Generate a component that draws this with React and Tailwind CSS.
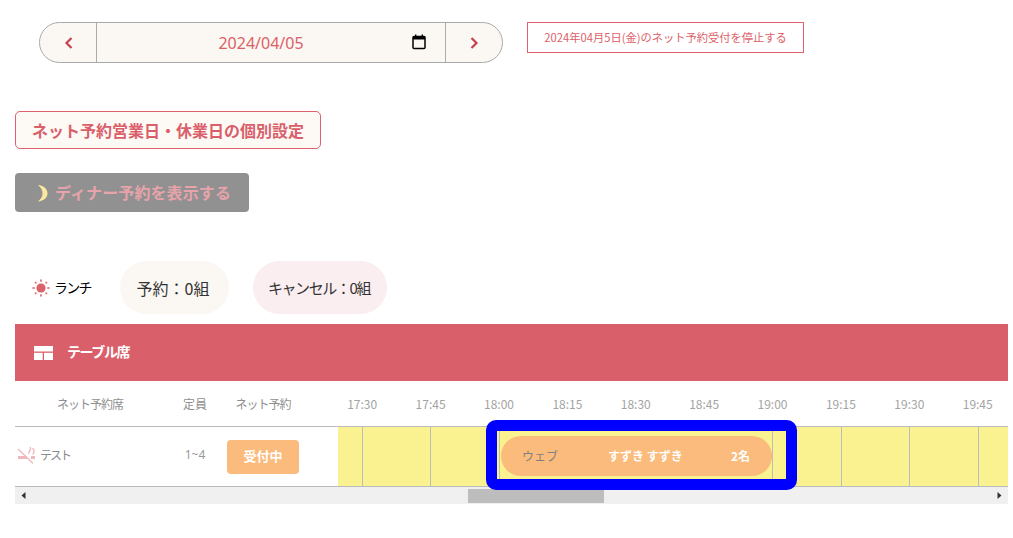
const font = { fontFamily: '"Noto Sans CJK JP", "Noto Sans", sans-serif' };

const times = ['17:30', '17:45', '18:00', '18:15', '18:30', '18:45', '19:00', '19:15', '19:30', '19:45'];
// 予約が入っている枠は罫線なし
const merged = ['18:15', '18:30', '18:45'];

function Chevron({ dir }) {
  return (
    <svg width="10" height="14" viewBox="0 0 10 14" fill="none" stroke="#c9404e" strokeWidth="2.2">
      <path d={dir === 'left' ? 'M7.5 2 L2.5 7 L7.5 12' : 'M2.5 2 L7.5 7 L2.5 12'} />
    </svg>
  );
}

function CalendarIcon() {
  return (
    <svg width="14" height="16" viewBox="0 0 14 16" className="block">
      <path d="M3 0.5h1.4v2H3zM9.6 0.5H11v2H9.6z" fill="#000" />
      <rect x="1" y="2.5" width="12" height="12" rx="1" fill="none" stroke="#000" strokeWidth="1.5" />
      <rect x="1" y="2.5" width="12" height="3" fill="#000" />
    </svg>
  );
}

function SunIcon() {
  return (
    <svg width="18" height="18" viewBox="0 0 18 18" fill="#dd6069">
      <circle cx="9" cy="9" r="4.6" />
      <rect x="8.2" y="0.5" width="1.6" height="2.2" />
      <rect x="8.2" y="15.3" width="1.6" height="2.2" />
      <rect x="0.5" y="8.2" width="2.2" height="1.6" />
      <rect x="15.3" y="8.2" width="2.2" height="1.6" />
      <rect x="2.8" y="2.8" width="1.7" height="1.7" />
      <rect x="13.5" y="2.8" width="1.7" height="1.7" />
      <rect x="2.8" y="13.5" width="1.7" height="1.7" />
      <rect x="13.5" y="13.5" width="1.7" height="1.7" />
    </svg>
  );
}

function TableIcon() {
  return (
    <svg width="19" height="14" viewBox="0 0 19 14" fill="#fff" className="mt-[3px]">
      <rect x="0" y="0" width="19" height="5.5" />
      <rect x="0" y="6.8" width="8.7" height="7.2" />
      <rect x="10" y="6.8" width="9" height="7.2" />
    </svg>
  );
}

function MoonIcon() {
  return (
    <svg width="11" height="18" viewBox="0 0 11 18" fill="#fbe8a0" className="mt-[3px]">
      <path d="M1 1 C7 1.500 10.500 5 10.500 9.500 C10.500 13.500 7 17 1 17.500 C4 15 5.500 12.500 5.500 9.500 C5.500 6 4 3.500 1 1 Z" />
    </svg>
  );
}

function NoSmokingIcon() {
  return (
    <svg width="19" height="18" viewBox="0 0 19 18" fill="none" stroke="#f0b8bd">
      <path d="M1 3 L16 17.500" strokeWidth="1.300" />
      <path d="M1 11.500 H10" strokeWidth="3" />
      <path d="M14 11.500 H18" strokeWidth="3" />
      <path d="M12 8 C10 5 15.500 4.500 13 1 M15.500 8.500 C18 6.500 17 3.500 15.500 2" strokeWidth="1.400" />
    </svg>
  );
}

export default function App() {
  return (
    <div className="w-[1013px] h-[538px] overflow-hidden bg-white px-[15px] pt-[22px] text-[#333]" style={font}>
      <div className="flex items-start">
        <div className="ml-[24px] flex h-[41px] w-[464px] items-stretch rounded-full border border-[#aaa] bg-[#fbf8f3]">
          <div className="flex w-[57px] items-center justify-center border-r border-[#aaa] pl-[1px]">
            <Chevron dir="left" />
          </div>
          <div className="relative flex flex-1 items-center justify-center pr-[20px] pt-[1px] font-['Noto_Sans'] text-[16px] text-[#db6068]">
            2024/04/05
            <span className="absolute right-[19px] top-[11px]">
              <CalendarIcon />
            </span>
          </div>
          <div className="flex w-[57px] items-center justify-center border-l border-[#aaa]">
            <Chevron dir="right" />
          </div>
        </div>
        <div className="ml-[24px] flex h-[31px] w-[277px] items-center justify-center border border-[#e0616c] text-[11.25px] text-[#dd5f6a]">
          2024年04月5日(金)のネット予約受付を停止する
        </div>
      </div>

      <div className="mt-[48px] flex h-[38px] w-[306px] items-center justify-center rounded-[5px] border border-[#e0616c] bg-[#fdfaf6] pb-[1px] text-[16px] font-bold text-[#d9606a]">
        ネット予約営業日・休業日の個別設定
      </div>

      <div className="mt-[24px] flex h-[39px] w-[234px] items-center gap-[7px] rounded-[4px] bg-[#919191] pb-[2px] pl-[22px] text-[16px] font-bold tracking-[0.1px] text-[#e6a3aa]">
        <MoonIcon />
        ディナー予約を表示する
      </div>

      <div className="mt-[49px] flex h-[53px] items-center">
        <div className="ml-[17px] flex w-[88px] items-center gap-[4px] text-[14px] tracking-[-1.8px] text-black">
          <SunIcon />
          ランチ
        </div>
        <div className="flex h-full w-[109px] items-center justify-center rounded-full bg-[#fbf8f3] pr-[3px] pt-[1px] text-[16px]">
          予約：0組
        </div>
        <div className="ml-[24px] flex h-full w-[134px] items-center justify-center rounded-full bg-[#faeef1] pr-[2px] pt-[1px] text-[15px] tracking-[-1.400px]">
          キャンセル：0組
        </div>
      </div>

      <div className="mt-[10px] flex h-[57px] w-[993px] items-center bg-[#d9606a] pb-[3px] pl-[19px] text-[14px] font-bold tracking-[-1.400px] text-white">
        <TableIcon />
        <span className="ml-[14px]">テーブル席</span>
      </div>

      <div className="w-[993px] overflow-hidden">
        <div className="mt-[1px] flex h-[44px] items-center text-[12px] text-[#8f8f8f]">
          <div className="w-[157px] shrink-0 pl-[42px] tracking-[-1px]">ネット予約席</div>
          <div className="w-[46px] shrink-0 text-center">定員</div>
          <div className="w-[90px] shrink-0 text-center tracking-[-1px]">ネット予約</div>
          <div className="w-[20px] shrink-0" />
          {times.map((t) => (
            <div key={t} className="w-[68.4px] shrink-0 text-center text-[#a3a3a3]">
              {t}
            </div>
          ))}
        </div>
      </div>

      <div className="relative w-[993px]">
        <div className="flex h-[61px] border-y border-[#bbb]">
          <div className="flex w-[157px] shrink-0 items-center pb-[3px] pl-[2px] text-[12px] text-[#8a8a8a]">
            <NoSmokingIcon />
            <span className="ml-[4px] tracking-[-2px]">テスト</span>
          </div>
          <div className="flex w-[46px] shrink-0 items-center justify-center pb-[3px] font-['Noto_Sans'] text-[12px] text-[#9a9a9a]">1~4</div>
          <div className="flex w-[120px] shrink-0 items-center">
            <div className="ml-[9px] flex h-[34px] w-[72px] items-center justify-center rounded-[4px] bg-[#fbbb7c] pb-[1px] text-[13px] font-bold text-white">
              受付中
            </div>
          </div>
          <div className="relative flex flex-1 overflow-hidden bg-[#faf190]">
            <div className="w-[24px] shrink-0" />
            {times.map((t) => (
              <div
                key={t}
                className={merged.includes(t) ? 'w-[68.4px] shrink-0 border-l border-transparent' : 'w-[68.4px] shrink-0 border-l border-[#bdbdbd]'}
              />
            ))}
            <div className="absolute left-[163px] top-[9px] flex h-[40px] w-[271px] items-center rounded-full bg-[#fbbb7c] pb-[1px] pl-[21px] text-[12px]">
              <span className="w-[86px] text-[#808080]">ウェブ</span>
              <span className="w-[123px] font-bold text-white">すずき すずき</span>
              <span className="font-bold text-white">2名</span>
            </div>
          </div>
        </div>
        <div className="absolute left-[471px] top-[-6px] h-[70px] w-[311px] rounded-[10px] border-[11px] border-[#0000ff]" />
      </div>

      <div className="flex h-[17px] w-[993px] items-center bg-[#f0f0f0]">
        <svg width="5" height="7" viewBox="0 0 5 7" className="ml-[6px]" fill="#333">
          <path d="M4.500 0 V7 L0.500 3.500 Z" />
        </svg>
        <div className="ml-[442px] h-[14px] w-[136px] bg-[#bdbdbd]" />
        <svg width="5" height="7" viewBox="0 0 5 7" className="ml-[393px]" fill="#333">
          <path d="M0.500 0 V7 L4.500 3.500 Z" />
        </svg>
      </div>
    </div>
  );
}
